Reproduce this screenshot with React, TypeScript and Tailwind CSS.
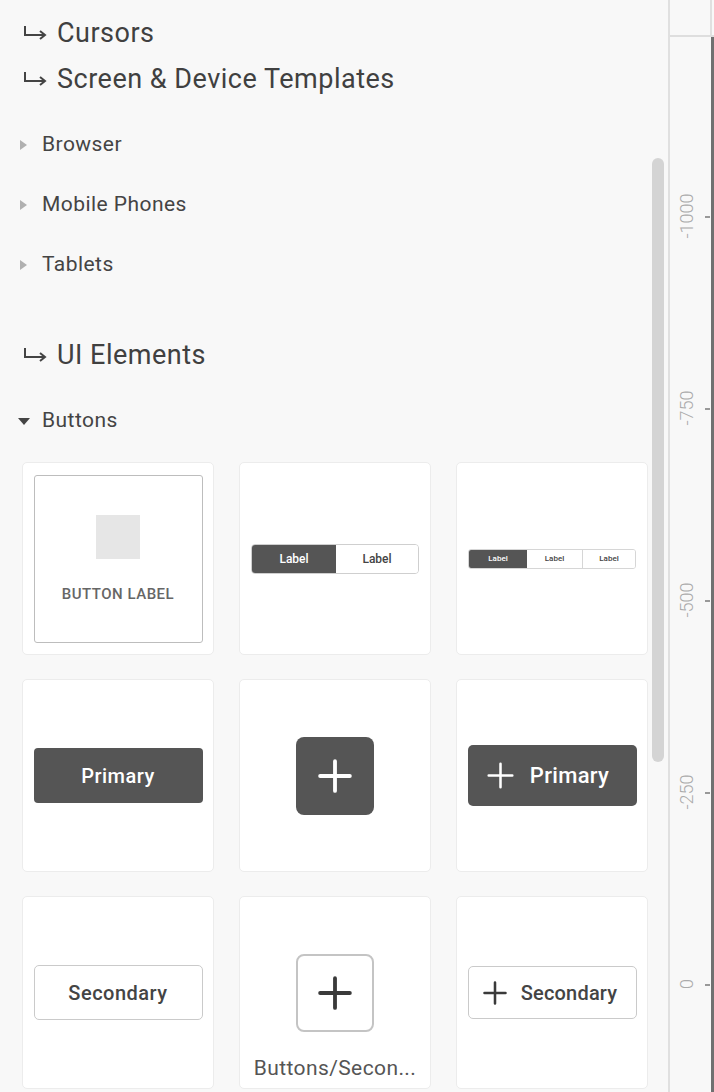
import { ReactNode } from "react";

const font = { fontFamily: "Roboto, 'Noto Sans', sans-serif" };

function HookArrow() {
    return (
        <svg width="24" height="14" viewBox="0 0 24 14" className="shrink-0">
            <path d="M2 0 V9 H21" fill="none" stroke="#444" strokeWidth="2" />
            <path d="M17 5 L22 9 L17 13" fill="none" stroke="#444" strokeWidth="2" />
        </svg>
    );
}

function SectionHeading({ children }: { children: ReactNode }) {
    return (
        <div className="h-[46px] flex items-center gap-[10px] pl-[23px]">
            <HookArrow />
            <span className="text-[27px] tracking-[0.5px] text-[#404040] leading-none">{children}</span>
        </div>
    );
}

function TreeRow({ label, open = false }: { label: string; open?: boolean }) {
    return (
        <div className="h-[60px] flex items-center pl-[18px]">
            <div className="w-[24px] flex items-center">
                {open ? (
                    <svg width="12" height="7" viewBox="0 0 12 7">
                        <path d="M0 0 H12 L6 7 Z" fill="#444" />
                    </svg>
                ) : (
                    <svg width="7" height="10" viewBox="0 0 7 10" className="ml-[2px]">
                        <path d="M0 0 L7 5 L0 10 Z" fill="#b0b0b0" />
                    </svg>
                )}
            </div>
            <span className="text-[21px] tracking-[0.45px] text-[#444]">{label}</span>
        </div>
    );
}

function PlusIcon({ size, color, stroke }: { size: number; color: string; stroke: number }) {
    return (
        <svg width={size} height={size} viewBox="0 0 32 32">
            <path d="M16 2 V30 M2 16 H30" stroke={color} strokeWidth={stroke} strokeLinecap="round" />
        </svg>
    );
}

function Card({ children, className = "" }: { children: ReactNode; className?: string }) {
    return (
        <div className={`relative h-[193px] bg-white border border-[#ececec] rounded-[5px] flex items-center justify-center ${className}`}>
            {children}
        </div>
    );
}

const rulerMarks = [
    { label: "-1000", y: 218 },
    { label: "-750", y: 410 },
    { label: "-500", y: 602 },
    { label: "-250", y: 794 },
    { label: "0", y: 986 },
];

export default function App() {
    return (
        <div className="w-[714px] h-[1092px] overflow-hidden flex bg-[#f8f8f8]" style={font}>
            {/* Library panel */}
            <div className="relative w-[668px] shrink-0 pt-[10px]">
                <SectionHeading>Cursors</SectionHeading>
                <SectionHeading>Screen &amp; Device Templates</SectionHeading>

                <div className="mt-[13px]">
                    <TreeRow label="Browser" />
                    <TreeRow label="Mobile Phones" />
                    <TreeRow label="Tablets" />
                </div>

                <div className="mt-[37px]">
                    <SectionHeading>UI Elements</SectionHeading>
                </div>

                <div className="mt-[13px]">
                    <TreeRow label="Buttons" open />
                </div>

                {/* Buttons grid */}
                <div className="mt-[11px] ml-[22px] grid grid-cols-[192px_192px_192px] gap-x-[25px] gap-y-[24px]">
                    <Card>
                        <div className="w-[169px] h-[168px] border border-[#bdbdbd] rounded-[3px] flex flex-col items-center justify-center gap-[27px]">
                            <div className="w-[44px] h-[44px] bg-[#e6e6e6]" />
                            <span className="text-[15px] tracking-[0.5px] font-medium text-[#666] leading-[17px]">BUTTON LABEL</span>
                        </div>
                    </Card>

                    <Card>
                        <div className="w-[168px] h-[30px] flex rounded-[4px] overflow-hidden border border-[#cfcfcf]">
                            <div className="w-[84px] bg-[#555] flex items-center justify-center text-[12px] font-medium text-white">Label</div>
                            <div className="flex-1 bg-white flex items-center justify-center text-[12px] font-medium text-[#444]">Label</div>
                        </div>
                    </Card>

                    <Card>
                        <div className="w-[168px] h-[20px] flex rounded-[3px] overflow-hidden border border-[#d6d6d6]">
                            <div className="w-[58px] bg-[#555] flex items-center justify-center text-[8px] font-medium text-white">Label</div>
                            <div className="w-[56px] bg-white border-r border-[#d6d6d6] flex items-center justify-center text-[8px] font-medium text-[#444]">Label</div>
                            <div className="flex-1 bg-white flex items-center justify-center text-[8px] font-medium text-[#444]">Label</div>
                        </div>
                    </Card>

                    <Card>
                        <div className="w-[169px] h-[55px] bg-[#555] rounded-[4px] flex items-center justify-center text-[20px] tracking-[0.5px] font-medium text-white">
                            Primary
                        </div>
                    </Card>

                    <Card>
                        <div className="w-[78px] h-[78px] bg-[#555] rounded-[8px] flex items-center justify-center">
                            <PlusIcon size={34} color="#fff" stroke={3.6} />
                        </div>
                    </Card>

                    <Card>
                        <div className="w-[169px] h-[61px] bg-[#555] rounded-[5px] flex items-center justify-center gap-[16px] pr-[8px] text-[22px] tracking-[0.3px] font-medium text-white">
                            <PlusIcon size={27} color="#fff" stroke={3} />
                            Primary
                        </div>
                    </Card>

                    <Card>
                        <div className="w-[169px] h-[55px] bg-white border-[1.5px] border-[#cacaca] rounded-[5px] flex items-center justify-center text-[20px] tracking-[0.5px] font-medium text-[#444]">
                            Secondary
                        </div>
                    </Card>

                    <Card>
                        <div className="w-[78px] h-[78px] bg-white border-2 border-[#c4c4c4] rounded-[8px] flex items-center justify-center">
                            <PlusIcon size={34} color="#3a3a3a" stroke={3.6} />
                        </div>
                        <span className="absolute bottom-[4px] left-0 right-0 text-center text-[21px] tracking-[0.4px] text-[#555] whitespace-nowrap">
                            Buttons/Secon...
                        </span>
                    </Card>

                    <Card>
                        <div className="w-[169px] h-[53px] bg-white border-[1.5px] border-[#cacaca] rounded-[5px] flex items-center justify-center gap-[14px] pr-[4px] text-[20px] tracking-[0.2px] font-medium text-[#444]">
                            <PlusIcon size={24} color="#3a3a3a" stroke={3.4} />
                            Secondary
                        </div>
                    </Card>
                </div>

                {/* Scrollbar */}
                <div className="absolute left-[652px] top-[158px] w-[12px] h-[604px] rounded-full bg-[#d4d4d4]" />
            </div>

            {/* Vertical ruler */}
            <div className="w-[2px] bg-[#e0e0e0] shrink-0" />
            <div className="flex-1 flex flex-col">
                <div className="h-[37px] flex border-b-2 border-[#dedede]">
                    <div className="flex-1" />
                    <div className="w-[2px] bg-[#e0e0e0]" />
                    <div className="w-[2px]" />
                </div>
                <div className="flex-1 flex">
                    <div className="relative flex-1">
                        {rulerMarks.map((m) => (
                            <div key={m.label}>
                                <span
                                    className="absolute left-[16px] w-0 h-0 flex items-center justify-center text-[18px] font-light text-[#aaa] -rotate-90 whitespace-nowrap"
                                    style={{ top: m.y - 39 }}
                                >
                                    {m.label}
                                </span>
                                <div className="absolute right-[1px] w-[5px] h-[1.5px] bg-[#999]" style={{ top: m.y - 39 }} />
                            </div>
                        ))}
                    </div>
                    <div className="w-[3px] bg-[#707070]" />
                </div>
            </div>
        </div>
    );
}
